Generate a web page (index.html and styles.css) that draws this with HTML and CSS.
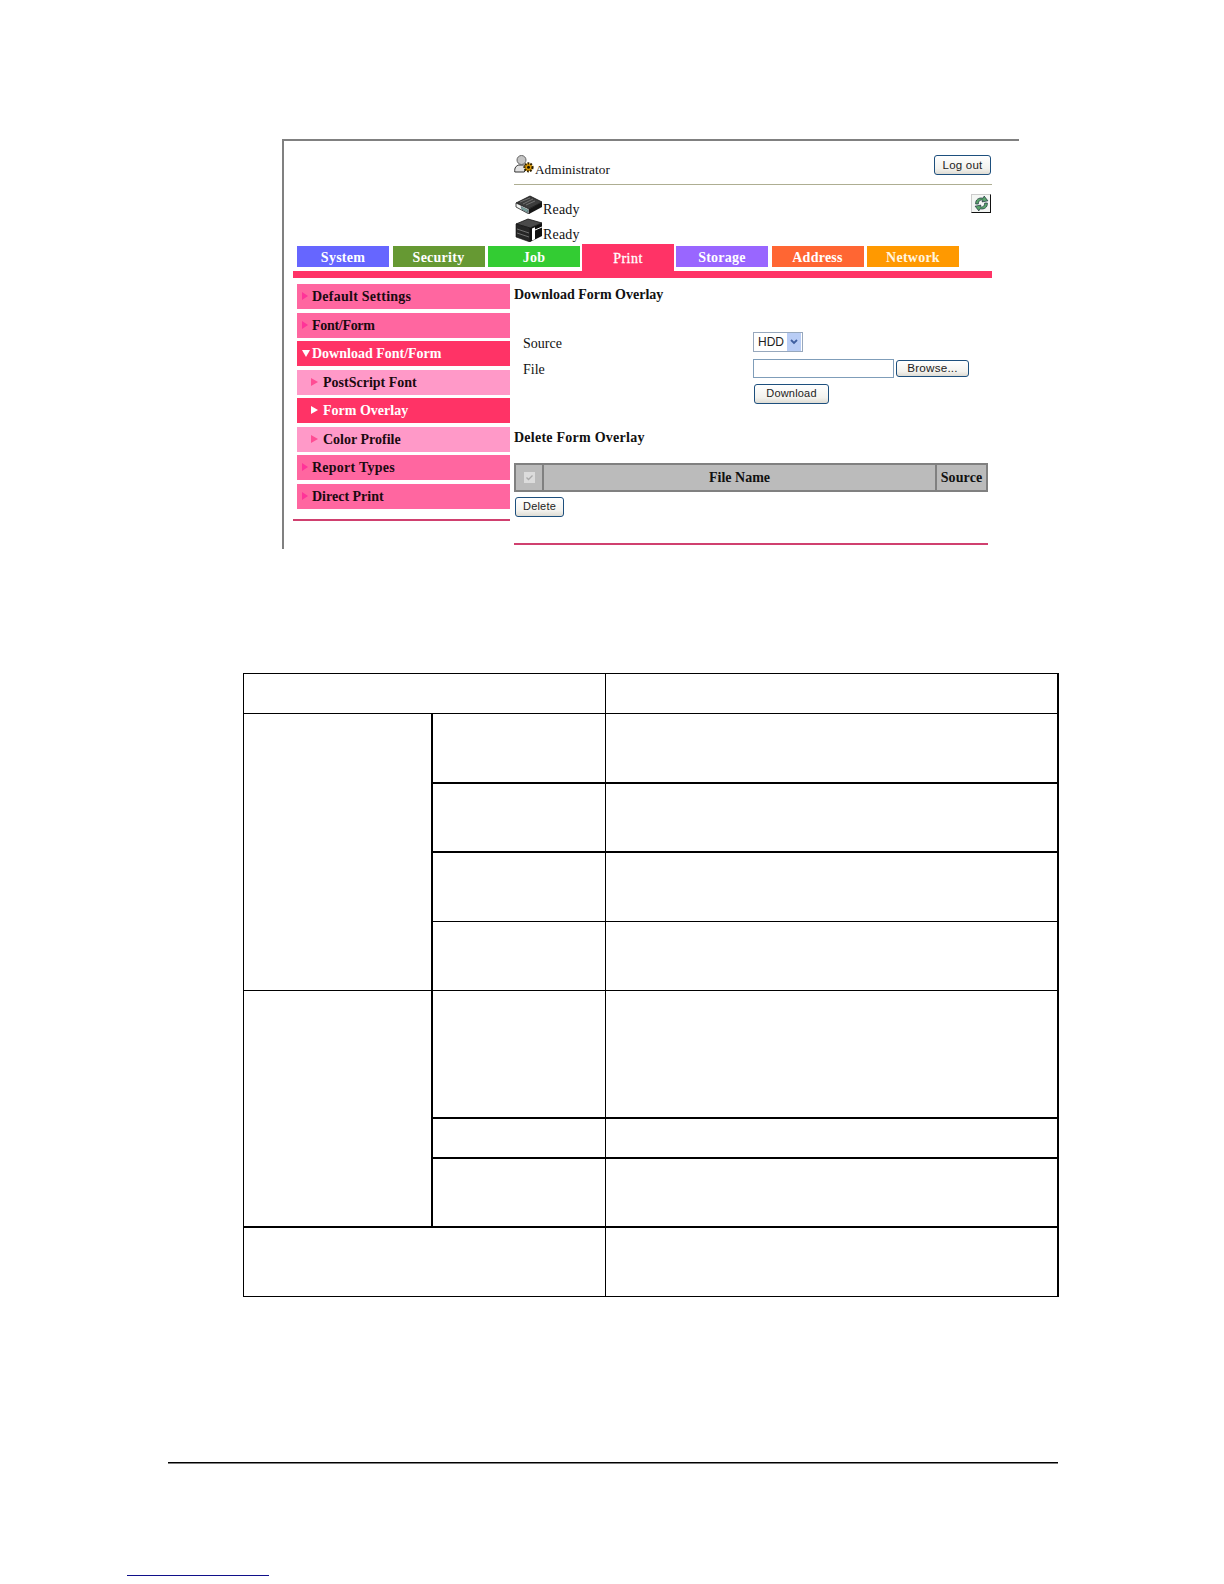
FILE: index.html
```html
<!DOCTYPE html>
<html lang="en">
<head>
<meta charset="utf-8">
<title>Download Form Overlay</title>
<link rel="stylesheet" href="styles.css">
</head>
<body>
<section class="frame">
  <header class="head">
    <div class="user-row">
      <div class="user">
        <svg class="icon-user" width="21" height="18" viewBox="0 0 21 18">
          <path d="M.8 17c-.6-4.400 1.600-6.400 4-7h5l2.500 2-2 5z" fill="#e2e2e2" stroke="#333" stroke-width="1"/>
          <circle cx="7.500" cy="5" r="4.500" fill="#c4c4c4" stroke="#666" stroke-width="1"/>
          <circle cx="14.500" cy="12.300" r="4" fill="#dd9c08" stroke="#2e2000" stroke-width="2.200" stroke-dasharray="1.700 1.200"/>
          <circle cx="14.500" cy="12.300" r="1.500" fill="#1c1400"/>
        </svg>
        <span class="user-name">Administrator</span>
      </div>
      <button class="btn btn-logout" type="button">Log out</button>
    </div>
    <div class="status">
      <div class="ready-list">
        <div class="ready ready-one">
          <svg width="27" height="19" viewBox="0 0 27 19">
            <path d="M1 8 15 1l12 6-13 7z" fill="#3c3c3c" stroke="#111" stroke-width=".8"/>
            <path d="M5 7 15 3M8 9l10-5M11 10l9-4" stroke="#8a8a8a" stroke-width=".7" fill="none"/>
            <path d="M1 8l13 6v5L1 12z" fill="#f2f4f2" stroke="#222" stroke-width=".8"/>
            <path d="M14 14l13-7v5l-13 7z" fill="#161616"/>
            <path d="M6 11.500l7 3.500v2.500l-6-3z" fill="#7fa9a0" stroke="#345" stroke-width=".5"/>
          </svg>
          <span>Ready</span>
        </div>
        <div class="ready ready-two">
          <svg width="27" height="24" viewBox="0 0 27 24">
            <path d="M1 6l12-5 14 4-12 5z" fill="#4a4a4a" stroke="#111" stroke-width=".8"/>
            <path d="M1 6l14 4v14L1 19z" fill="#262626" stroke="#111" stroke-width=".6"/>
            <path d="M2 11l12 4M2 15l12 4" stroke="#777" stroke-width=".9"/>
            <path d="M15 10l12-5v13l-12 6z" fill="#111"/>
            <path d="M17 10.500l3-1.300v12l-3 1.400z" fill="#fff"/>
            <path d="M20 12l7-3" stroke="#fff" stroke-width="1"/>
          </svg>
          <span>Ready</span>
        </div>
      </div>
      <div class="refresh">
        <svg width="17" height="17" viewBox="0 0 16 16">
          <path d="M2.500 8.500C2 4.500 5.500 2 9.500 3L10.500 1l3.500 4.500-5.500 1 .8-1.600C6.500 4.200 5 6 5 8.500z" fill="#5aa56c" stroke="#123" stroke-width=".6"/>
          <path d="M13.500 7.500c.5 4-3 6.500-7 5.500L5.500 15 2 10.500l5.500-1-.8 1.600c2.800.7 4.300-1.100 4.300-3.600z" fill="#5aa56c" stroke="#123" stroke-width=".6"/>
        </svg>
      </div>
    </div>
  </header>

  <nav class="tabs">
    <a class="tab tab-system">System</a>
    <a class="tab tab-security">Security</a>
    <a class="tab tab-job">Job</a>
    <a class="tab tab-print">Print</a>
    <a class="tab tab-storage">Storage</a>
    <a class="tab tab-address">Address</a>
    <a class="tab tab-network">Network</a>
  </nav>
  <div class="tab-bar"></div>

  <div class="content">
    <aside class="side">
      <a class="item item-wide"><i class="arrow"></i>Default Settings</a>
      <a class="item item-tight"><i class="arrow"></i>Font/Form</a>
      <a class="item item-open"><i class="arrow-down"></i>Download Font/Form</a>
      <a class="item item-sub"><i class="arrow"></i>PostScript Font</a>
      <a class="item item-sub item-current"><i class="arrow"></i>Form Overlay</a>
      <a class="item item-sub"><i class="arrow"></i>Color Profile</a>
      <a class="item item-wide"><i class="arrow"></i>Report Types</a>
      <a class="item"><i class="arrow"></i>Direct Print</a>
      <div class="side-rule"></div>
    </aside>

    <main class="main">
      <h2 class="title title-download">Download Form Overlay</h2>
      <form class="form">
        <label class="form-label">Source</label>
        <div class="select">
          <span class="select-value">HDD</span>
          <span class="select-arrow">
            <svg width="10" height="8" viewBox="0 0 10 8"><path d="M2 2l3 3 3-3" fill="none" stroke="#3f5f9f" stroke-width="1.800"/></svg>
          </span>
        </div>
        <label class="form-label form-label-file">File</label>
        <div class="file">
          <input class="file-input" type="text">
          <button class="btn btn-browse" type="button">Browse...</button>
        </div>
        <div></div>
        <button class="btn btn-download" type="button">Download</button>
      </form>

      <h2 class="title title-delete">Delete Form Overlay</h2>
      <table class="files">
        <tr>
          <th class="files-check">
            <svg width="11" height="11" viewBox="0 0 11 11"><rect width="11" height="11" fill="#dcdcdc"/><path d="M2.500 5.500l2 2 4-4" fill="none" stroke="#aaa" stroke-width="1.300"/></svg>
          </th>
          <th class="files-name">File Name</th>
          <th class="files-source">Source</th>
        </tr>
      </table>
      <button class="btn btn-delete" type="button">Delete</button>
      <div class="main-rule"></div>
    </main>
  </div>
</section>

<table class="grid">
  <colgroup><col class="col-a"><col class="col-b"><col class="col-c"></colgroup>
  <tr class="row-s"><td colspan="2"></td><td></td></tr>
  <tr class="row-m"><td rowspan="4" class="thick-r"></td><td class="thick-b"></td><td class="thick-b"></td></tr>
  <tr class="row-m"><td class="thick-b"></td><td class="thick-b"></td></tr>
  <tr class="row-n"><td></td><td></td></tr>
  <tr class="row-m"><td></td><td></td></tr>
  <tr class="row-l"><td rowspan="3" class="thick-r thick-b"></td><td class="thick-b"></td><td class="thick-b"></td></tr>
  <tr class="row-s"><td class="thick-b"></td><td class="thick-b"></td></tr>
  <tr class="row-m"><td class="thick-b"></td><td class="thick-b"></td></tr>
  <tr class="row-n"><td colspan="2"></td><td></td></tr>
</table>

<div class="foot-rule"></div>
<div class="foot-link"></div>
</body>
</html>
```

FILE: styles.css
```css
* { box-sizing: border-box; }
html, body { margin: 0; padding: 0; background: #fff; }
body {
  height: 1584px;
  overflow: hidden;
  font: 14px/16px "Liberation Serif", "Times New Roman", serif;
  color: #111;
}

/* screenshot frame */
.frame {
  width: 737px;
  margin: 139px 0 0 282px;
  padding: 0 27px 4px 9px;
  border-top: 2px solid #808080;
  border-left: 2px solid #808080;
}

.head { padding-left: 221px; }
.user-row {
  height: 44px;
  padding-top: 14px;
  display: flex;
  justify-content: space-between;
  align-items: flex-start;
  border-bottom: 1px solid #aeae92;
}
.user {
  display: flex;
  align-items: flex-start;
}
.user-name { margin-top: 7px; font-size: 13.300px; letter-spacing: .02px; }

.status {
  height: 59px;
  padding-top: 9px;
  display: flex;
  justify-content: space-between;
  align-items: flex-start;
}
.ready-list { padding: 1px 0 0 1px; }
.ready {
  display: flex;
  align-items: flex-start;
  height: 23px;
  letter-spacing: .2px;
}
.ready span { margin-left: 1px; }
.ready-one span { margin-top: 7px; }
.ready-two span { margin-top: 9px; }
.refresh {
  width: 20px;
  height: 19px;
  margin-right: 1px;
  display: flex;
  align-items: center;
  justify-content: center;
  background: #f4f6f4;
  border: 1px solid #ccc;
  border-right-color: #111;
  border-bottom-color: #111;
}

/* buttons */
.btn {
  padding: 0;
  border: 1px solid #1d4f7d;
  border-radius: 3px;
  background: linear-gradient(#ffffff, #f3f2ee 70%, #dedcd4);
  color: #222;
  font: 11.500px/1 "Liberation Sans", Arial, sans-serif;
  letter-spacing: .2px;
}
.btn-logout { width: 57px; height: 20px; margin-right: 1px; padding-top: 1px; font-size: 11.500px; }
.btn-browse { width: 73px; height: 17px; font-size: 11.700px; }
.btn-download { width: 75px; height: 20px; margin-left: 1px; padding-bottom: 1px; font-size: 11px; }
.btn-delete { width: 49px; height: 20px; margin: 5px 0 0 1px; padding-bottom: 1px; font-size: 11px; }

/* tabs */
.tabs {
  height: 27px;
  margin-left: 4px;
  display: flex;
  gap: 3.500px;
  align-items: flex-start;
}
.tab {
  width: 92px;
  height: 21px;
  margin-top: 2px;
  color: #fff;
  text-align: center;
  font-weight: 700;
  line-height: 24px;
  letter-spacing: .25px;
}
.tab-system { background: #6666ff; }
.tab-security { background: #669933; }
.tab-job { background: #33cc33; }
.tab-print {
  height: 27px;
  margin: 0 -1.500px;
  line-height: 29px;
  background: #ff3366;
  letter-spacing: .5px;
  font-weight: 400;
  -webkit-text-stroke: .3px #fff;
}
.tab-storage { background: #9966ff; }
.tab-address { background: #ff6633; }
.tab-network { background: #ff9900; color: #fff6e0; }
.tab-bar { height: 7px; background: #ff3366; }

/* two columns */
.content { display: flex; gap: 4px; }
.side { width: 217px; padding: 6px 0 0; }
.item {
  display: flex;
  align-items: center;
  height: 25px;
  margin: 0 0 3.500px 4px;
  padding: 1px 0 0 5px;
  background: #ff66a0;
  font-weight: 700;
  color: #1a0a10;
}
.item-wide { letter-spacing: .25px; }
.item-tight { letter-spacing: -.3px; }
.arrow {
  width: 0;
  height: 0;
  margin: -2px 4px 0 0;
  border-left: 6px solid #ff3399;
  border-top: 4px solid transparent;
  border-bottom: 4px solid transparent;
}
.arrow-down {
  width: 0;
  height: 0;
  margin: -2px 2px 0 0;
  border-top: 7px solid #fff;
  border-left: 4px solid transparent;
  border-right: 4px solid transparent;
}
.item-open { background: #ff3366; color: #fff; }
.item-sub {
  padding-left: 14px;
  background: #ff99c8;
}
.item-sub .arrow { margin-right: 5px; border-left-width: 7px; border-left-color: #ff4d94; }
.item-current { background: #ff3366; color: #fff; }
.item-current .arrow { border-left-color: #fff; }
.side-rule { height: 2px; margin-top: 10px; background: #d0406f; }

.main { width: 474px; }
.title {
  margin: 0;
  font-size: 14px;
  line-height: 16px;
  font-weight: 700;
}
.title-download { margin-top: 9px; }
.title-delete { margin-top: 26px; letter-spacing: .25px; }

.form {
  margin-top: 29px;
  padding-left: 9px;
  display: grid;
  grid-template-columns: 230px 1fr;
  grid-template-rows: 20px 19px 20px;
  row-gap: 6.500px;
}
.form-label { padding-top: 4px; }
.form-label-file { padding-top: 3px; }
.select {
  width: 50px;
  height: 20px;
  display: flex;
  justify-content: space-between;
  border: 1px solid #97a8bd;
  background: #fff;
  padding-right: 1px;
}
.select-value {
  padding-left: 4px;
  font: 12px/18px "Liberation Sans", Arial, sans-serif;
  color: #222;
}
.select-arrow {
  width: 14px;
  display: flex;
  align-items: center;
  justify-content: center;
  background: #b9cdf5;
}
.file { display: flex; align-items: center; gap: 2px; }
.file-input {
  width: 141px;
  height: 19px;
  padding: 0;
  border: 1px solid #7f9db9;
  background: #fff;
}

.files {
  width: 474px;
  height: 29px;
  margin-top: 17px;
  border-collapse: collapse;
  table-layout: fixed;
  background: #bbbbbb;
}
.files th {
  padding: 0;
  border: 2px solid #808080;
  font-size: 14px;
  font-weight: 700;
}
.files-check { width: 28px; line-height: 0; }
.files-source { width: 51px; letter-spacing: .1px; }
.main-rule { height: 2px; margin-top: 26px; background: #d0406f; }

/* lower ruled table */
.grid {
  width: 814px;
  margin: 124px 0 0 243px;
  border-collapse: collapse;
  table-layout: fixed;
}
.col-a { width: 188px; }
.col-b { width: 174px; }
.col-c { width: 452px; }
.grid td {
  padding: 0;
  border: 1px solid #000;
}
.grid td:last-child { border-right-width: 2px; }
.grid .thick-b { border-bottom-width: 2px; }
.grid .thick-r { border-right-width: 2px; }
.row-s { height: 40px; }
.row-m { height: 69px; }
.row-n { height: 70px; }
.row-l { height: 127px; }

.foot-rule {
  width: 890px;
  height: 1px;
  margin: 165px 0 0 168px;
  background: #000;
  box-shadow: 0 .5px 0 #000;
}
.foot-link {
  width: 142px;
  height: 1px;
  margin: 112px 0 0 127px;
  background: #10108a;
}
```
